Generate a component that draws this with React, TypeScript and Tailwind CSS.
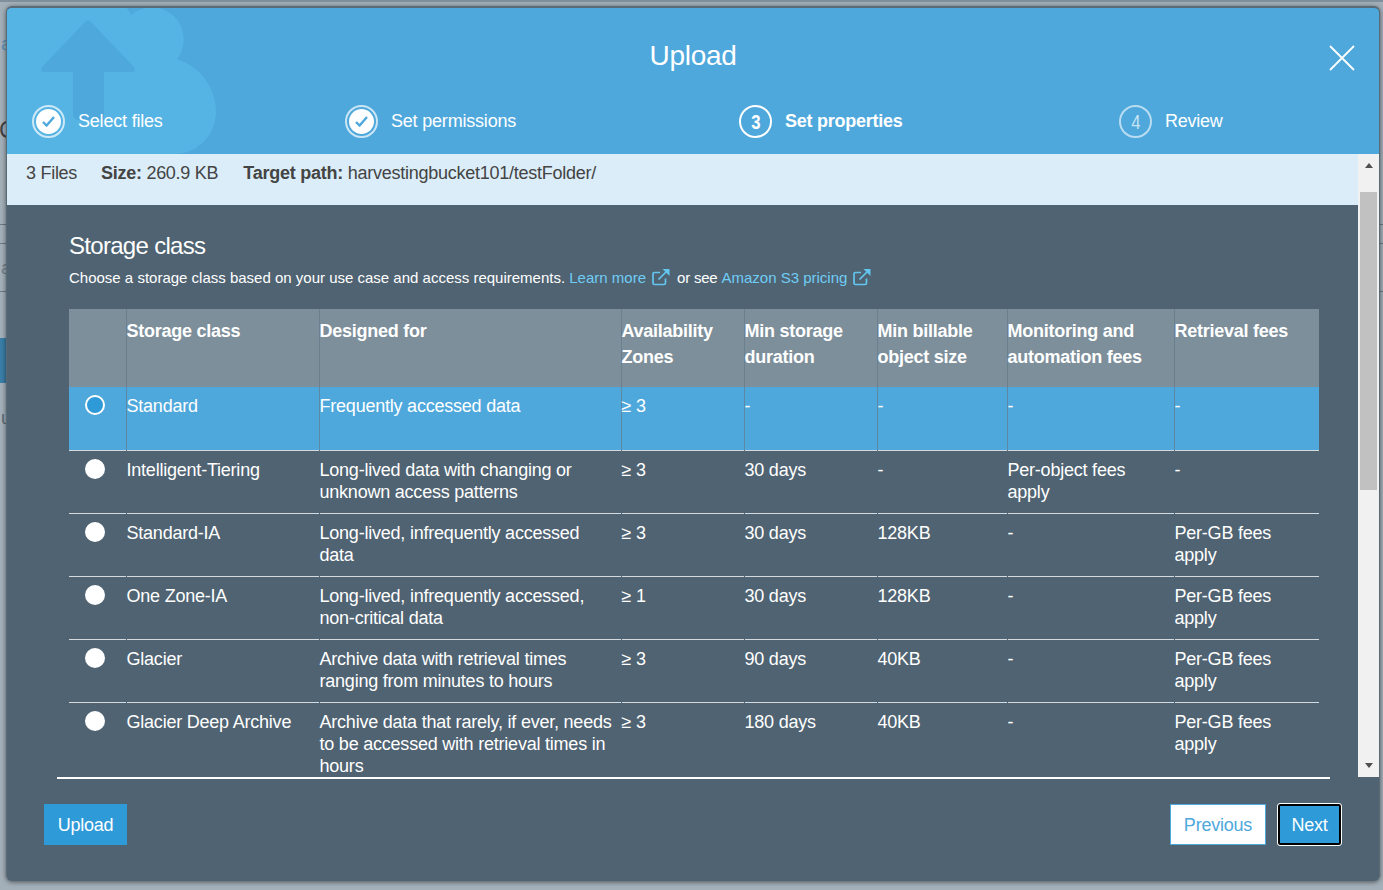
const rows = [
  { name: 'Intelligent-Tiering', design: 'Long-lived data with changing or unknown access patterns', az: '≥ 3', dur: '30 days', size: '-', mon: 'Per-object fees apply', fee: '-' },
  { name: 'Standard-IA', design: 'Long-lived, infrequently accessed data', az: '≥ 3', dur: '30 days', size: '128KB', mon: '-', fee: 'Per-GB fees apply' },
  { name: 'One Zone-IA', design: 'Long-lived, infrequently accessed, non-critical data', az: '≥ 1', dur: '30 days', size: '128KB', mon: '-', fee: 'Per-GB fees apply' },
  { name: 'Glacier', design: 'Archive data with retrieval times ranging from minutes to hours', az: '≥ 3', dur: '90 days', size: '40KB', mon: '-', fee: 'Per-GB fees apply' },
  { name: 'Glacier Deep Archive', design: 'Archive data that rarely, if ever, needs to be accessed with retrieval times in hours', az: '≥ 3', dur: '180 days', size: '40KB', mon: '-', fee: 'Per-GB fees apply' },
];

function CheckStep({ label }: { label: string }) {
  return (
    <div className="flex items-center gap-[13px]">
      <div className="flex h-[33px] w-[33px] items-center justify-center rounded-full border-2 border-white/70">
        <div className="flex h-[25px] w-[25px] items-center justify-center rounded-full bg-white">
          <svg width="15" height="13" viewBox="0 0 15 13" fill="none">
            <path d="M2 7l3.6 3.6L13 2" stroke="#4ea8dc" strokeWidth="2.4" />
          </svg>
        </div>
      </div>
      <span className="pb-[2px] text-[18px] tracking-[-0.2px] text-white">{label}</span>
    </div>
  );
}

function NumStep({ n, label, active }: { n: number; label: string; active?: boolean }) {
  return (
    <div className="flex items-center gap-[13px]">
      <div className={`flex h-[33px] w-[33px] items-center justify-center rounded-full border-2 text-[21px] ${active ? 'border-white font-bold text-white' : 'border-white/60 text-white/70'}`}>
        <span className="scale-x-[0.8]">{n}</span>
      </div>
      <span className={`pb-[2px] text-[18px] tracking-[-0.25px] text-white ${active ? 'font-bold' : ''}`}>{label}</span>
    </div>
  );
}

function ExtLink() {
  return (
    <svg width="18" height="18" viewBox="0 0 18 18" fill="none" stroke="#62c6ef" strokeWidth="1.7" className="mb-[3px] ml-[6px] mr-[7px] shrink-0">
      <path d="M13.500 10.500V15a1.500 1.500 0 0 1-1.500 1.500H2.500A1.500 1.500 0 0 1 1 15V6a1.500 1.500 0 0 1 1.500-1.500H8" />
      <path d="M6.500 11.500 15.500 2.500" />
      <path d="M10.500 1H17.500V8Z" fill="#62c6ef" stroke="none" />
    </svg>
  );
}

export default function App() {
  const cell = 'border-l border-[#64798a]/70 align-top';
  const bodyCell = 'border-l border-transparent align-top pt-[8px]';
  return (
    <div className="relative h-[890px] w-[1383px] overflow-hidden bg-[#a4b0b9] font-['Liberation_Sans',sans-serif] text-[18px] leading-[22px] tracking-[-0.22px] text-white">
      {/* page behind the dialog, only the edges show */}
      <div className="absolute left-0 top-0 h-[2px] w-full bg-[#7f909c]"></div>
      <span className="absolute left-[1px] top-[33px] text-[#5c8fb5]">a</span>
      <span className="absolute left-[-1px] top-[118px] text-[24px] leading-[24px] text-[#444]">C</span>
      <div className="absolute left-0 top-[224px] h-px w-full bg-[#6b7a86]"></div>
      <div className="absolute left-0 top-[243px] h-px w-full bg-[#6b7a86]"></div>
      <span className="absolute left-[1px] top-[257px] text-[#757f88]">a</span>
      <div className="absolute left-0 top-[291px] h-px w-full bg-[#6b7a86]"></div>
      <div className="absolute left-0 top-[338px] h-[45px] w-[7px] bg-[#3a7ea8]"></div>
      <span className="absolute left-[1px] top-[407px] text-[#5c6a75]">u</span>

      <div className="absolute left-[6px] top-[6px] flex h-[875px] w-[1374px] flex-col overflow-hidden rounded-[6px] border-t-2 border-l border-r border-[#5a6b78] bg-[#4f6372] shadow-[0_1px_5px_rgba(0,0,0,0.55)]">
        <div className="relative h-[146px] shrink-0 overflow-hidden bg-[#4ea8dc]">
          <svg className="absolute left-0 top-0" width="212" height="146" viewBox="0 0 212 146">
            <path d="M0 0H120L124 7A32 32 0 0 1 170 51A56 56 0 0 1 209 105A42 42 0 0 1 165 146H0Z" fill="#55b4e4" />
            <path d="M78 14Q81 11 84 14L127 59Q130 64 125 64H97V112H72Q66 112 66 106V64H37Q32 64 35 59Z" fill="#4ea8dc" />
          </svg>
          <div className="relative pt-[31px] text-center text-[28px] leading-[34px] tracking-[-0.3px]">Upload</div>
          <svg className="absolute right-[24px] top-[37px]" width="26" height="26" viewBox="0 0 26 26" fill="none" stroke="white" strokeWidth="1.800">
            <path d="M1 1 25 25M25 1 1 25" />
          </svg>
          <div className="absolute left-[25px] top-[97px]"><CheckStep label="Select files" /></div>
          <div className="absolute left-[338px] top-[97px]"><CheckStep label="Set permissions" /></div>
          <div className="absolute left-[732px] top-[97px]"><NumStep n={3} label="Set properties" active /></div>
          <div className="absolute left-[1112px] top-[97px]"><NumStep n={4} label="Review" /></div>
        </div>

        <div className="flex h-[623px] shrink-0">
          <div className="w-[1351px] shrink-0 overflow-hidden">
            <div className="flex h-[51px] gap-[24px] bg-[#dbedf8] pl-[19px] pt-[8px] tracking-[-0.28px] text-[#444]">
              <span>3 Files</span>
              <span><b>Size:</b> 260.9 KB</span>
              <span className="ml-px tracking-[-0.25px]"><b>Target path:</b> harvestingbucket101/testFolder/</span>
            </div>
            <div className="pl-[62px] pt-[29px]">
              <div className="text-[24px] leading-[24px] tracking-[-0.7px]">Storage class</div>
              <div className="mt-[8px] flex h-[24px] items-center text-[15px] tracking-normal">
                <span>Choose a storage class based on your use case and access requirements.&nbsp;</span>
                <span className="text-[#6fcdf5]">Learn more</span>
                <ExtLink />
                <span className="tracking-[-0.2px]">or see&nbsp;</span>
                <span className="text-[#6fcdf5]">Amazon S3 pricing</span>
                <ExtLink />
              </div>
              <table className="mt-[19px] w-[1250px] table-fixed border-collapse">
                <colgroup>
                  <col className="w-[57px]" />
                  <col className="w-[193px]" />
                  <col className="w-[302px]" />
                  <col className="w-[123px]" />
                  <col className="w-[133px]" />
                  <col className="w-[130px]" />
                  <col className="w-[167px]" />
                  <col className="w-[145px]" />
                </colgroup>
                <thead>
                  <tr className="h-[78px] bg-[#7d8f9b] text-left font-bold leading-[26px] tracking-[-0.25px]">
                    <th className="align-top"></th>
                    {['Storage class', 'Designed for', 'Availability Zones', 'Min storage duration', 'Min billable object size', 'Monitoring and automation fees', 'Retrieval fees'].map((h) => (
                      <th key={h} className={`${cell} pt-[9px] font-bold`}>{h}</th>
                    ))}
                  </tr>
                </thead>
                <tbody>
                  <tr className="h-[63px] border-b border-[#d5dade] bg-[#4ea8dc]">
                    <td className="align-top pl-[16px] pt-[8px]">
                      <div className="h-5 w-5 rounded-full border-2 border-white bg-[#2f9ad8]"></div>
                    </td>
                    <td className={`${cell} pt-[8px]`}>Standard</td>
                    <td className={`${cell} pt-[8px]`}>Frequently accessed data</td>
                    <td className={`${cell} pt-[8px]`}>≥ 3</td>
                    <td className={`${cell} pt-[8px]`}>-</td>
                    <td className={`${cell} pt-[8px]`}>-</td>
                    <td className={`${cell} pt-[8px]`}>-</td>
                    <td className={`${cell} pt-[8px]`}>-</td>
                  </tr>
                  {rows.map((r, i) => (
                    <tr key={r.name} className={`h-[63px] ${i < rows.length - 1 ? 'border-b border-[#d5dade]' : ''}`}>
                      <td className="align-top pl-[16px] pt-[8px]">
                        <div className="h-5 w-5 rounded-full bg-white"></div>
                      </td>
                      <td className={bodyCell}>{r.name}</td>
                      <td className={`${bodyCell} pr-[6px]`}>{r.design}</td>
                      <td className={bodyCell}>{r.az}</td>
                      <td className={bodyCell}>{r.dur}</td>
                      <td className={bodyCell}>{r.size}</td>
                      <td className={`${bodyCell} pr-[30px]`}>{r.mon}</td>
                      <td className={`${bodyCell} pr-[30px]`}>{r.fee}</td>
                    </tr>
                  ))}
                </tbody>
              </table>
            </div>
          </div>
          <div className="flex w-[21px] shrink-0 flex-col items-center bg-[#f1f1f1] px-[2px] py-[9px]">
            <div className="h-0 w-0 shrink-0 border-x-[4px] border-b-[5px] border-x-transparent border-b-[#505050]"></div>
            <div className="mt-[24px] h-[298px] w-full shrink-0 bg-[#c1c1c1]"></div>
            <div className="mt-auto h-0 w-0 shrink-0 border-x-[4px] border-t-[5px] border-x-transparent border-t-[#505050]"></div>
          </div>
        </div>

        <div className="ml-[50px] h-[2px] w-[1273px] shrink-0 bg-white"></div>

        <div className="flex items-center justify-between pl-[37px] pr-[38px] pt-[25px]">
          <button className="h-[41px] w-[83px] bg-[#2f9ad8] text-white">Upload</button>
          <div className="flex items-center gap-[12px]">
            <button className="h-[41px] w-[96px] border border-[#4ea8dc] bg-white text-[#4ea8dc]">Previous</button>
            <button className="h-[41px] w-[63px] rounded-[2px] border-2 border-black bg-[#2f9ad8] text-white outline outline-1 outline-white">Next</button>
          </div>
        </div>
      </div>
    </div>
  );
}
